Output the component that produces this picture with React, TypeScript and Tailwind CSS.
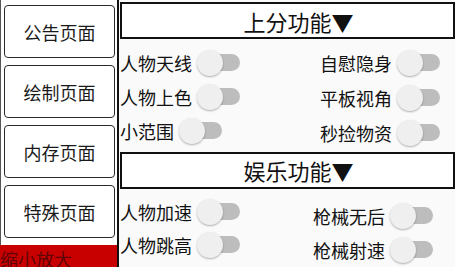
const pages = ['公告页面', '绘制页面', '内存页面', '特殊页面'];

function Toggle() {
  return (
    <div className="relative w-[43px] h-[28px] shrink-0">
      <div className="absolute left-[6px] top-[5px] w-[37px] h-[17px] rounded-full bg-[#bdbdbd]" />
      <div className="absolute left-0 top-[1px] w-[26px] h-[26px] rounded-full bg-[#efefef] shadow-[0_1px_2px_rgba(0,0,0,0.3)]" />
    </div>
  );
}

function Row({ label, h }: { label: string; h: string }) {
  return (
    <div className={`flex items-center gap-[5px] ${h}`}>
      <span className="text-[18px] leading-none text-[#111]">{label}</span>
      <Toggle />
    </div>
  );
}

function Header({ title }: { title: string }) {
  return (
    <div className="ml-[1px] h-[38px] border-2 border-[#111] bg-white flex items-center justify-center pl-[22px]">
      <span className="text-[22px] leading-none text-[#111]">{title}</span>
    </div>
  );
}

export default function App() {
  return (
    <div className="w-[455px] h-[267px] flex overflow-hidden bg-white font-['Noto_Sans_CJK_SC',sans-serif]">
      <div className="w-[117px] flex flex-col shrink-0">
        <div className="flex-1 border-l border-[#555] pt-[5px] pl-[3px] pr-[2px] flex flex-col gap-[7px]">
          {pages.map((p) => (
            <div
              key={p}
              className="h-[53px] border-[1.5px] border-[#2a2a2a] rounded-[4px] bg-white flex items-center justify-center"
            >
              <span className="text-[18px] leading-none text-[#1a1a1a]">{p}</span>
            </div>
          ))}
        </div>
        <div className="h-[22px] w-[119px] bg-[#c80000] overflow-hidden pt-[3px]">
          <span className="text-[18px] leading-none text-[#5e0606] whitespace-nowrap">缩小放大</span>
        </div>
      </div>
      <div className="flex-1 border-l-2 border-[#111] bg-[#fafafa] flex flex-col pt-[2px]">
        <Header title="上分功能▼" />
        <div className="h-[114px] flex">
          <div className="w-[170px] pt-[7px] pl-[1px] flex flex-col">
            <Row label="人物天线" h="h-[34px]" />
            <Row label="人物上色" h="h-[34px]" />
            <Row label="小范围" h="h-[34px]" />
          </div>
          <div className="flex-1 pt-[6px] pr-[15px] flex flex-col items-end">
            <Row label="自慰隐身" h="h-[35px]" />
            <Row label="平板视角" h="h-[35px]" />
            <Row label="秒捡物资" h="h-[36px]" />
          </div>
        </div>
        <Header title="娱乐功能▼" />
        <div className="flex-1 flex">
          <div className="w-[170px] pt-[6px] pl-[1px] flex flex-col">
            <Row label="人物加速" h="h-[33px]" />
            <Row label="人物跳高" h="h-[33px]" />
          </div>
          <div className="flex-1 pt-[10px] pr-[22px] flex flex-col items-end">
            <Row label="枪械无后" h="h-[34px]" />
            <Row label="枪械射速" h="h-[34px]" />
          </div>
        </div>
      </div>
    </div>
  );
}
